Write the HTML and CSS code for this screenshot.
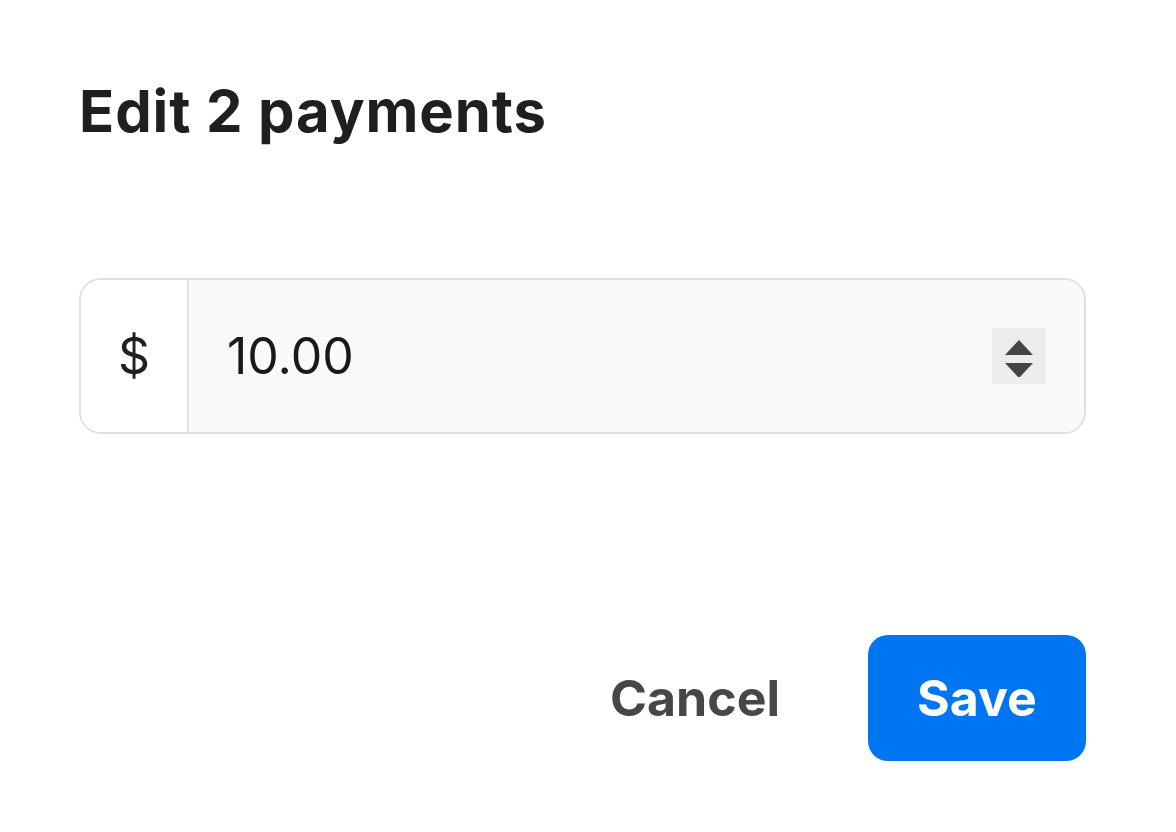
FILE: index.html
```html
<!DOCTYPE html>
<html>
<head>
<meta charset="utf-8">
<link rel="stylesheet" href="styles.css">
</head>
<body>
<div class="dialog">
  <h1 class="title">Edit 2 payments</h1>
  <div class="field">
    <div class="prefix">$</div>
    <div class="input">
      <span class="value">10.00</span>
      <div class="spinner">
        <svg width="30" height="42" viewBox="0 0 30 42"><polygon points="15,5 29,20 1,20" fill="#444"/><polygon points="1,29 29,29 15,44" fill="#444" transform="translate(0,-1)"/></svg>
      </div>
    </div>
  </div>
  <div class="actions">
    <button class="btn cancel">Cancel</button>
    <button class="btn save">Save</button>
  </div>
</div>
</body>
</html>
```
FILE: styles.css
```css
html, body {
  margin: 0;
  padding: 0;
  background: #fff;
}
body {
  font-family: Inter, "Noto Sans", sans-serif;
  color: #1f1f1f;
}
.dialog {
  width: 1007px;
  padding: 74px 0 0 79px;
  display: flex;
  flex-direction: column;
}
.title {
  margin: 0;
  font-size: 58px;
  font-weight: 700;
  line-height: 74px;
  letter-spacing: 0.9px;
  color: #1f1f1f;
}
.field {
  margin-top: 130px;
  height: 152px;
  border: 2px solid #e0e0e0;
  border-radius: 22px;
  display: flex;
  overflow: hidden;
}
.prefix {
  width: 106px;
  border-right: 2px solid #e0e0e0;
  background: #fff;
  display: flex;
  align-items: center;
  justify-content: center;
  font-size: 50px;
  color: #1f1f1f;
}
.input {
  flex: 1;
  background: #fafafa;
  display: flex;
  align-items: center;
  padding: 0 38px 0 38px;
}
.value {
  flex: 1;
  font-size: 50px;
  color: #1a1a1a;
}
.spinner {
  width: 54px;
  height: 56px;
  background: #ececec;
  display: flex;
  align-items: center;
  justify-content: center;
}
.actions {
  margin-top: 201px;
  display: flex;
  justify-content: flex-end;
  align-items: center;
  gap: 36px;
}
.btn {
  font-family: Inter, "Noto Sans", sans-serif;
  font-size: 50px;
  font-weight: 700;
  border: none;
  cursor: pointer;
}
.cancel {
  background: transparent;
  color: #474747;
  padding: 0 52px;
}
.save {
  background: #0075f2;
  color: #fff;
  width: 218px;
  height: 126px;
  border-radius: 20px;
}
```
